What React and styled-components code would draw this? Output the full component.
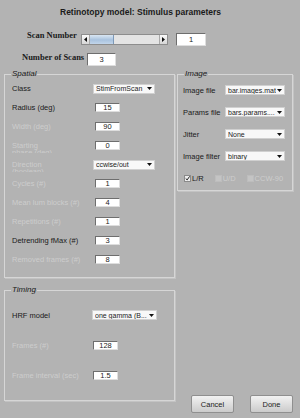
import React from 'react';
import styled, { createGlobalStyle } from 'styled-components';

const GlobalStyle = createGlobalStyle`
    body {
        margin: 0;
        background: #b3b3b3;
    }
`;

const Window = styled.div`
    width: 300px;
    height: 418px;
    box-sizing: border-box;
    padding-top: 7px;
    background: #b3b3b3;
    font-family: "Liberation Sans", Arial, sans-serif;
    font-size: 7.5px;
    color: #1a1a1a;
    overflow: hidden;
`;

const Title = styled.h1`
    margin: 0 0 0 60px;
    font-size: 8.5px;
    line-height: 10px;
    font-weight: 700;
`;

const TopRow = styled.div`
    display: flex;
    align-items: center;
    height: 13px;
    margin-top: ${(p) => p.$top}px;
    padding-left: ${(p) => p.$indent}px;
`;

const TopLabel = styled.span`
    align-self: flex-start;
    width: ${(p) => p.$width}px;
    margin-top: ${(p) => p.$raise}px;
    font-family: "Liberation Serif", "Times New Roman", serif;
    font-weight: 700;
    font-size: 8.5px;
    line-height: 10px;
    white-space: nowrap;
`;

const Slider = styled.div`
    display: flex;
    width: 87px;
    height: 11px;
    margin-right: 8px;
    box-sizing: border-box;
    border: 1px solid #8d8d8d;
    background: #e6e6e6;
`;

const SliderArrow = styled.div`
    width: 7px;
    display: flex;
    align-items: center;
    justify-content: center;
    background: linear-gradient(#fafafa, #d6d6d6);
`;

const SliderTrack = styled.div`
    flex: 1;
    display: flex;
    background: #e4e4e4;
    border-left: 1px solid #a9a9a9;
    border-right: 1px solid #a9a9a9;
`;

const SliderThumb = styled.div`
    width: 24px;
    box-sizing: border-box;
    background: linear-gradient(#d9e6f3, #a9c3df 55%, #c2d5ea);
    border-right: 1px solid #7d99b8;
`;

const Edit = styled.div`
    width: ${(p) => p.$w}px;
    height: ${(p) => p.$h || 9}px;
    margin-left: ${(p) => p.$left || 0}px;
    box-sizing: border-box;
    display: flex;
    align-items: center;
    justify-content: center;
    background: #ffffff;
    border: 1px solid;
    border-color: #6e6e6e #dedede #dedede #6e6e6e;
    font-size: 7.5px;
    color: #222222;
`;

const Dropdown = styled.div`
    width: ${(p) => p.$w}px;
    height: 10px;
    box-sizing: border-box;
    display: flex;
    align-items: center;
    gap: 1px;
    padding: 0 2px 0 2px;
    background: #f8f8f8;
    border: 1px solid #d0d0d0;
    font-size: 7px;
    color: #222222;
    white-space: nowrap;
`;

const DropdownText = styled.span`
    flex: 1;
    overflow: hidden;
`;

const Main = styled.div`
    display: grid;
    grid-template-columns: 171px 116px;
    column-gap: 2px;
    height: 344px;
    margin: 3px 0 0 4px;
`;

const Column = styled.div`
    display: flex;
    flex-direction: column;
    gap: ${(p) => p.$gap || 0}px;
`;

const Panel = styled.fieldset`
    margin: 0;
    padding: 0 0 ${(p) => p.$bottom}px ${(p) => p.$left}px;
    border: 1px solid #d6d6d6;
    box-shadow: 1px 1px 0 #c3c3c3;
    min-width: 0;
`;

const Legend = styled.legend`
    margin-left: ${(p) => p.$shift}px;
    padding: 0 1px;
    font-style: italic;
    font-size: 8px;
    line-height: 10px;
    color: #1a1a1a;
`;

const FieldGrid = styled.div`
    display: grid;
    grid-template-columns: ${(p) => p.$labelCol}px auto;
    grid-auto-rows: ${(p) => p.$row}px;
    align-items: center;
    padding-top: ${(p) => p.$top || 0}px;
`;

const Label = styled.div`
    white-space: nowrap;
    color: ${(p) => (p.$disabled ? '#cdcdcd' : '#1a1a1a')};
`;

const WrapLabel = styled(Label)`
    align-self: start;
    width: 46px;
    height: 11px;
    margin-top: 6px;
    white-space: normal;
    line-height: 7px;
    overflow: hidden;
`;

const CheckRow = styled.div`
    grid-column: 1 / span 2;
    display: flex;
    align-items: center;
    padding-left: 1px;
    gap: 11px;
`;

const CheckItem = styled.div`
    display: flex;
    align-items: center;
    gap: 1px;
    color: ${(p) => (p.$disabled ? '#cdcdcd' : '#1a1a1a')};
`;

const CheckBox = styled.span`
    width: 7px;
    height: 7px;
    box-sizing: border-box;
    display: flex;
    align-items: center;
    justify-content: center;
    background: ${(p) => (p.$disabled ? '#c4c4c4' : '#eeeeee')};
    border: 1px solid ${(p) => (p.$disabled ? '#bdbdbd' : '#8a8a8a')};
`;

const ButtonRow = styled.div`
    display: flex;
    gap: 16px;
    margin-top: auto;
    padding-left: 14px;
`;

const Button = styled.button`
    width: 43px;
    height: 18px;
    padding: 0;
    font-family: inherit;
    font-size: 7.5px;
    color: #222222;
    background: linear-gradient(#f2f2f2, #cbcbcb);
    border: 1px solid #8f8f8f;
    border-radius: 2px;
`;

const Caret = () => (
    <svg width="5" height="3" viewBox="0 0 5 3">
        <path d="M0 0H5L2.5 3Z" fill="#111" />
    </svg>
);

const Arrow = ({ dir }) => (
    <svg width="3" height="5" viewBox="0 0 3 5">
        <path d={dir === 'left' ? 'M3 0V5L0 2.5Z' : 'M0 0V5L3 2.5Z'} fill="#111" />
    </svg>
);

const Tick = () => (
    <svg width="7" height="7" viewBox="0 0 7 7">
        <path d="M1 3.5L3 5.5L6.5 0.5" stroke="#111" strokeWidth="1.3" fill="none" />
    </svg>
);

const Select = ({ w, value }) => (
    <Dropdown $w={w}>
        <DropdownText>{value}</DropdownText>
        <Caret />
    </Dropdown>
);

const spatialRows = [
    { label: 'Class', select: 'StimFromScan' },
    { label: 'Radius (deg)', value: '15' },
    { label: 'Width (deg)', value: '90', disabled: true },
    { label: 'Starting phase (deg)', value: '0', disabled: true, wrap: true },
    { label: 'Direction (boolean)', select: 'ccwise/out', disabled: true, wrap: true },
    { label: 'Cycles (#)', value: '1', disabled: true },
    { label: 'Mean lum blocks (#)', value: '4', disabled: true },
    { label: 'Repetitions (#)', value: '1', disabled: true },
    { label: 'Detrending fMax (#)', value: '3' },
    { label: 'Removed frames (#)', value: '8', disabled: true },
];

const imageRows = [
    { label: 'Image file', select: 'bar.images.mat' },
    { label: 'Params file', select: 'bars.params....' },
    { label: 'Jitter', select: 'None' },
    { label: 'Image filter', select: 'binary' },
];

const timingRows = [
    { label: 'HRF model', select: 'one gamma (B...' },
    { label: 'Frames (#)', value: '128', disabled: true },
    { label: 'Frame interval (sec)', value: '1.5', disabled: true },
];

const renderRow = (row, selectWidth, editLeft) => {
    const LabelTag = row.wrap ? WrapLabel : Label;
    return (
        <React.Fragment key={row.label}>
            <LabelTag $disabled={row.disabled}>{row.label}</LabelTag>
            {row.select ? (
                <Select w={selectWidth} value={row.select} />
            ) : (
                <Edit $w={25} $left={editLeft}>{row.value}</Edit>
            )}
        </React.Fragment>
    );
};

export default function App() {
    return (
        <>
            <GlobalStyle />
            <Window>
                <Title>Retinotopy model: Stimulus parameters</Title>
                <TopRow $top={16} $indent={27}>
                    <TopLabel $width={54} $raise={-3}>Scan Number</TopLabel>
                    <Slider>
                        <SliderArrow><Arrow dir="left" /></SliderArrow>
                        <SliderTrack><SliderThumb /></SliderTrack>
                        <SliderArrow><Arrow dir="right" /></SliderArrow>
                    </Slider>
                    <Edit $w={30} $h={13}>1</Edit>
                </TopRow>
                <TopRow $top={7} $indent={22}>
                    <TopLabel $width={65} $raise={-1}>Number of Scans</TopLabel>
                    <Edit $w={29} $h={13}>3</Edit>
                </TopRow>
                <Main>
                    <Column $gap={7}>
                        <Panel $left={7} $bottom={8}>
                            <Legend $shift={-1}>Spatial</Legend>
                            <FieldGrid $labelCol={81} $row={19}>
                                {spatialRows.map((row) => renderRow(row, 62, 2))}
                            </FieldGrid>
                        </Panel>
                        <Panel $left={7} $bottom={10}>
                            <Legend $shift={-1}>Timing</Legend>
                            <FieldGrid $labelCol={80} $row={30} $top={5}>
                                {timingRows.map((row) => renderRow(row, 65, 1))}
                            </FieldGrid>
                        </Panel>
                    </Column>
                    <Column>
                        <Panel $left={5} $bottom={1}>
                            <Legend $shift={1}>Image</Legend>
                            <FieldGrid $labelCol={42} $row={22}>
                                {imageRows.map((row) => renderRow(row, 60, 0))}
                                <CheckRow>
                                    <CheckItem>
                                        <CheckBox><Tick /></CheckBox>L/R
                                    </CheckItem>
                                    <CheckItem $disabled>
                                        <CheckBox $disabled />U/D
                                    </CheckItem>
                                    <CheckItem $disabled>
                                        <CheckBox $disabled />CCW-90
                                    </CheckItem>
                                </CheckRow>
                            </FieldGrid>
                        </Panel>
                        <ButtonRow>
                            <Button>Cancel</Button>
                            <Button>Done</Button>
                        </ButtonRow>
                    </Column>
                </Main>
            </Window>
        </>
    );
}
